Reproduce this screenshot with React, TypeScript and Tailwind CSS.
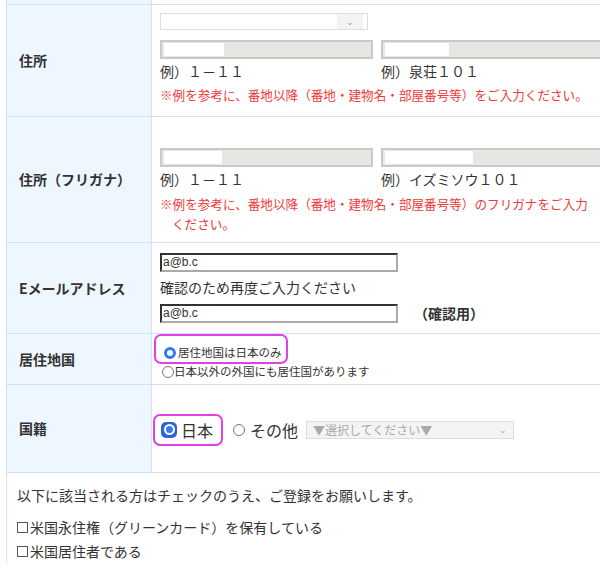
const F = { fontFamily: '"Noto Sans CJK JP","Noto Sans",sans-serif' };

function GrayInput({ w, white }: { w: string; white: number }) {
  return (
    <div className={`h-[19px] ${w} border-2 border-[#c9c9c5] bg-[#e6e6e2] relative shrink-0`}>
      <div className="absolute left-[2px] top-[1px] bottom-[1px] bg-white" style={{ width: white }} />
    </div>
  );
}

function Label({ children }: { children: React.ReactNode }) {
  return (
    <div className="w-[145px] shrink-0 bg-[#eef6ff] border-r border-[#cfe2f7] flex items-center pl-[12px] text-[14px] font-bold text-[#333]">
      {children}
    </div>
  );
}

export default function App() {
  return (
    <div className="w-[600px] h-[564px] overflow-hidden bg-white text-[#333]" style={F}>
      <div className="ml-[6px] border-l border-[#cfe2f7]">
        <div className="flex h-[5px] border-b border-[#cfe2f7]">
          <div className="w-[145px] bg-[#eef6ff] border-r border-[#cfe2f7]" />
        </div>
        {/* 住所 */}
        <div className="flex h-[112px] border-b border-[#cfe2f7]">
          <Label>住所</Label>
          <div className="pl-[8px] pt-[8px]">
            <div className="w-[208px] h-[17px] border border-[#ddd] bg-white flex justify-end items-center pr-[4px]">
              <div className="h-full w-[26px] bg-[#f3f3f3] flex items-center justify-center text-[9px] text-[#999]">⌄</div>
            </div>
            <div className="flex gap-[8px] mt-[10px]">
              <GrayInput w="w-[213px]" white={60} />
              <GrayInput w="w-[240px]" white={64} />
            </div>
            <div className="flex text-[14px] mt-[2px] leading-[20px]">
              <div className="w-[221px]">例）１－１１</div>
              <div>例）泉荘１０１</div>
            </div>
            <div className="text-[12.6px] text-[#ee3a3a] mt-[5px] whitespace-nowrap">※例を参考に、番地以降（番地・建物名・部屋番号等）をご入力ください。</div>
          </div>
        </div>
        {/* フリガナ */}
        <div className="flex h-[126px] border-b border-[#cfe2f7]">
          <Label>住所（フリガナ）</Label>
          <div className="pl-[8px] pt-[31px]">
            <div className="flex gap-[8px]">
              <GrayInput w="w-[213px]" white={58} />
              <GrayInput w="w-[240px]" white={88} />
            </div>
            <div className="flex text-[14px] mt-[2px] leading-[20px]">
              <div className="w-[221px]">例）１－１１</div>
              <div>例）イズミソウ１０１</div>
            </div>
            <div className="text-[12.6px] text-[#ee3a3a] mt-[5px] leading-[20px] w-[440px] pl-[12px] -indent-[12px]">※例を参考に、番地以降（番地・建物名・部屋番号等）のフリガナをご入力<br />ください。</div>
          </div>
        </div>
        {/* Email */}
        <div className="flex h-[91px] border-b border-[#cfe2f7]">
          <Label>Eメールアドレス</Label>
          <div className="pl-[8px] pt-[10px]">
            <div className="w-[238px] h-[19px] border-2 border-[#333] border-r-[#aaa] border-b-[#aaa] text-[12px] leading-[14px] pl-[1px]" style={{ fontFamily: '"Liberation Sans",sans-serif' }}>a@b.c</div>
            <div className="text-[14px] mt-[5px] leading-[20px]">確認のため再度ご入力ください</div>
            <div className="flex items-center mt-[6px]">
              <div className="w-[238px] h-[19px] border-2 border-[#333] border-r-[#aaa] border-b-[#aaa] text-[12px] leading-[14px] pl-[1px]" style={{ fontFamily: '"Liberation Sans",sans-serif' }}>a@b.c</div>
              <div className="ml-[16px] text-[14px] font-bold">（確認用）</div>
            </div>
          </div>
        </div>
        {/* 居住地国 */}
        <div className="flex h-[51px] border-b border-[#cfe2f7]">
          <Label>居住地国</Label>
          <div className="pl-[2px]">
            <div className="relative w-[134px] h-[30px] border-2 border-[#e040e8] rounded-[7px] flex items-center pl-[8px] pt-[8px] text-[11.5px]">
              <span className="w-[12px] h-[12px] rounded-full border-[3.5px] border-[#2f7bf5] bg-white mr-[2px]" />
              居住地国は日本のみ
            </div>
            <div className="flex items-center pl-[8px] text-[11.5px] -mt-[1px]">
              <span className="w-[12px] h-[12px] rounded-full border border-[#777] bg-white" />
              日本以外の外国にも居住国があります
            </div>
          </div>
        </div>
        {/* 国籍 */}
        <div className="flex h-[88px] border-b border-[#cfe2f7]">
          <Label>国籍</Label>
          <div className="flex items-center pl-[1px] pt-[2px]">
            <div className="w-[70px] h-[32px] border-2 border-[#e040e8] rounded-[7px] flex items-center pl-[6px] text-[16px]">
              <span className="w-[16px] h-[16px] rounded-[5px] bg-[#2c64d8] flex items-center justify-center mr-[4px]">
                <span className="w-[11px] h-[11px] rounded-full border-2 border-white bg-[#3b78f0]" />
              </span>
              日本
            </div>
            <span className="ml-[10px] w-[12px] h-[12px] rounded-full border border-[#777]" />
            <span className="ml-[5px] text-[16px]">その他</span>
            <div className="ml-[8px] w-[208px] h-[18px] border border-[#ddd] bg-[#f4f4f4] flex items-center justify-between px-[6px] text-[12px] text-[#aaa]">
              <span>▼選択してください▼</span><span className="text-[9px]">⌄</span>
            </div>
          </div>
        </div>
        <div className="pl-[10px] pt-[10px] text-[14px] leading-[24px]">
          <div>以下に該当される方はチェックのうえ、ご登録をお願いします。</div>
          <div className="mt-[8px] flex items-center"><span className="w-[11px] h-[11px] border border-[#555] mr-[2px]" />米国永住権（グリーンカード）を保有している</div>
          <div className="flex items-center"><span className="w-[11px] h-[11px] border border-[#555] mr-[2px]" />米国居住者である</div>
        </div>
      </div>
    </div>
  );
}
